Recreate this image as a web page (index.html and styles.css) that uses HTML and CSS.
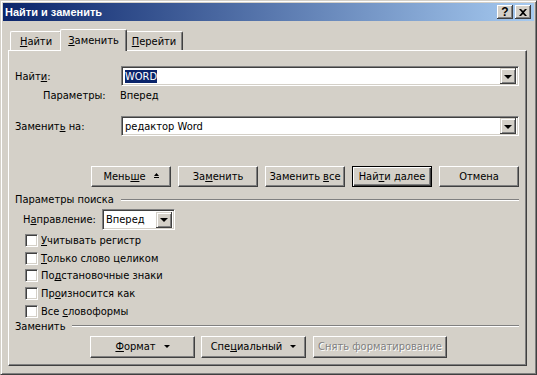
FILE: index.html
```html
<!DOCTYPE html>
<html lang="ru">
<head>
    <meta charset="UTF-8">
    <title>Найти и заменить</title>
    <link rel="stylesheet" href="styles.css">
</head>
<body>
    <div class="window">
        <div class="titlebar">
            <span class="title">Найти и заменить</span>
            <div class="caption-buttons">
                <span class="cap-btn help">?</span>
                <span class="cap-btn close">
                    <svg width="8" height="7" viewBox="0 0 8 7"><path d="M0 0h2l2 2 2-2h2L5 3.5 8 7H6L4 5 2 7H0l3-3.5z" fill="#000"/></svg>
                </span>
            </div>
        </div>

        <div class="tabs">
            <div class="tab t1"><span><u>Н</u>айти</span></div>
            <div class="tab t2 active"><span><u>З</u>аменить</span></div>
            <div class="tab t3"><span><u>П</u>ерейти</span></div>
        </div>

        <div class="panel">
            <div class="field-row">
                <label class="field-label">Найт<u>и</u>:</label>
                <div class="combo">
                    <span class="combo-text"><span class="selected">WORD</span></span>
                    <span class="drop-btn"><span class="arrow-down"></span></span>
                </div>
            </div>
            <div class="params">
                <span class="params-label">Параметры:</span>
                <span>Вперед</span>
            </div>
            <div class="field-row replace-row">
                <label class="field-label">Заменит<u>ь</u> на:</label>
                <div class="combo">
                    <span class="combo-text">редактор Word</span>
                    <span class="drop-btn"><span class="arrow-down"></span></span>
                </div>
            </div>

            <div class="button-row">
                <button class="btn"><span>Мень<u>ш</u>е</span>
                    <svg class="less-icon" width="5" height="5" viewBox="0 0 5 5"><path d="M2.5 0L5 3H0z M0 4h5v1H0z" fill="#000"/></svg>
                </button>
                <button class="btn"><span>За<u>м</u>енить</span></button>
                <button class="btn"><span>Заменить <u>в</u>се</span></button>
                <button class="btn default"><span>Най<u>т</u>и далее</span></button>
                <button class="btn"><span>Отмена</span></button>
            </div>

            <div class="group-head">
                <span>Параметры поиска</span>
                <span class="group-line"></span>
            </div>
            <div class="direction">
                <span class="direction-label">Н<u>а</u>правление:</span>
                <div class="combo select">
                    <span class="combo-text">Вперед</span>
                    <span class="drop-btn"><span class="arrow-down"></span></span>
                </div>
            </div>
            <ul class="checks">
                <li><span class="box"></span><span><u>У</u>читывать регистр</span></li>
                <li><span class="box"></span><span><u>Т</u>олько слово целиком</span></li>
                <li><span class="box"></span><span>По<u>д</u>становочные знаки</span></li>
                <li><span class="box"></span><span>Пр<u>о</u>износится как</span></li>
                <li><span class="box"></span><span>Все <u>с</u>ловоформы</span></li>
            </ul>

            <div class="group-head">
                <span>Заменить</span>
                <span class="group-line"></span>
            </div>
            <div class="bottom-row">
                <button class="btn wide"><span><u>Ф</u>ормат</span><span class="arrow-small"></span></button>
                <button class="btn wide"><span>Спе<u>ц</u>иальный</span><span class="arrow-small"></span></button>
                <button class="btn clear" disabled><span>Снять форматирование</span></button>
            </div>
        </div>
    </div>
</body>
</html>
```

FILE: styles.css
```css
body {
    margin: 0;
    background-color: #d4d0c8;
    font-family: "DejaVu Sans Condensed", "DejaVu Sans", sans-serif;
    font-stretch: condensed;
    font-size: 11px;
    color: #000;
    white-space: nowrap;
}
u {
    text-decoration: underline;
    text-underline-offset: 1px;
}
.window {
    width: 537px;
    height: 375px;
    box-sizing: border-box;
    border: 1px solid;
    border-color: #d4d0c8 #404040 #404040 #d4d0c8;
    box-shadow: inset 1px 1px #fff, inset -1px -1px #808080;
    padding: 2px;
    background-color: #d4d0c8;
}
.titlebar {
    height: 18px;
    display: flex;
    align-items: center;
    justify-content: space-between;
    padding: 0 3px 0 2px;
    background: linear-gradient(to right, #0a246a, #a6caf0);
}
.title {
    color: #fff;
    font-family: "Liberation Sans", Arial, sans-serif;
    font-stretch: normal;
    font-weight: bold;
    font-size: 11px;
}
.caption-buttons {
    display: flex;
    gap: 2px;
}
.cap-btn {
    width: 16px;
    height: 14px;
    box-sizing: border-box;
    display: flex;
    align-items: center;
    justify-content: center;
    background-color: #d4d0c8;
    box-shadow: inset -1px -1px #404040, inset 1px 1px #fff, inset -2px -2px #808080;
    font-family: "Liberation Sans", Arial, sans-serif;
    font-weight: bold;
    font-size: 12px;
    line-height: 14px;
}
.tabs {
    display: flex;
    align-items: flex-end;
    height: 21px;
    margin: 8px 0 0 7px;
}
.tab {
    height: 19px;
    box-sizing: border-box;
    display: flex;
    align-items: center;
    justify-content: center;
    border-top: 1px solid #fff;
    border-left: 1px solid #fff;
    border-right: 1px solid #404040;
    border-radius: 2px 2px 0 0;
    box-shadow: inset -1px 0 #808080;
    padding-top: 1px;
}
.t1 { width: 52px; }
.t2 { width: 63px; }
.t3 { width: 58px; }
.tab.active {
    height: 22px;
    margin: 0 -2px -1px;
    width: 67px;
    position: relative;
    z-index: 1;
    background-color: #d4d0c8;
    padding-bottom: 2px;
}
.panel {
    height: 316px;
    box-sizing: border-box;
    margin: 0 7px 0 5px;
    border: 1px solid;
    border-color: #fff #404040 #404040 #fff;
    box-shadow: inset -1px -1px #808080;
    padding: 15px 7px 0 6px;
}
.field-row {
    display: flex;
    align-items: center;
    height: 20px;
}
.field-label {
    width: 106px;
}
.combo {
    flex: 1;
    height: 20px;
    box-sizing: border-box;
    display: flex;
    align-items: center;
    justify-content: space-between;
    background-color: #fff;
    border: 1px solid;
    border-color: #808080 #fff #fff #808080;
    box-shadow: inset 1px 1px #404040, inset -1px -1px #d4d0c8;
    padding: 2px;
}
.combo-text {
    padding-left: 1px;
}
.selected {
    background-color: #0a246a;
    color: #fff;
}
.drop-btn {
    width: 16px;
    height: 16px;
    box-sizing: border-box;
    display: flex;
    align-items: center;
    justify-content: center;
    background-color: #d4d0c8;
    box-shadow: inset -1px -1px #404040, inset 1px 1px #d4d0c8, inset 2px 2px #fff, inset -2px -2px #808080;
}
.arrow-down {
    width: 0;
    height: 0;
    border-left: 4px solid transparent;
    border-right: 4px solid transparent;
    border-top: 4px solid #000;
    margin-top: 1px;
}
.params {
    display: flex;
    height: 13px;
    margin-top: 3px;
    padding-left: 28px;
    line-height: 13px;
}
.params-label {
    width: 77px;
}
.replace-row {
    margin-top: 14px;
}
.button-row {
    display: flex;
    justify-content: flex-end;
    gap: 7px;
    margin-top: 30px;
}
.btn {
    width: 80px;
    height: 21px;
    box-sizing: border-box;
    padding: 0;
    font-family: inherit;
    font-stretch: condensed;
    font-size: 11px;
    color: #000;
    background-color: #d4d0c8;
    border: 1px solid;
    border-color: #fff #404040 #404040 #fff;
    box-shadow: inset -1px -1px #808080;
    display: flex;
    align-items: center;
    justify-content: center;
    white-space: nowrap;
}
.btn.default {
    border: 1px solid #000;
    box-shadow: inset 1px 1px #fff, inset -1px -1px #404040, inset -2px -2px #808080;
}
.less-icon {
    margin-left: 8px;
    margin-top: -2px;
}
.group-head {
    display: flex;
    align-items: center;
    height: 13px;
    margin-top: 6px;
}
.group-line {
    flex: 1;
    height: 0;
    margin-left: 7px;
    border-top: 1px solid #808080;
    border-bottom: 1px solid #fff;
}
.direction {
    display: flex;
    align-items: center;
    margin-top: 3px;
    padding-left: 8px;
}
.direction-label {
    width: 79px;
}
.combo.select {
    flex: none;
    width: 73px;
    height: 21px;
}
.checks {
    list-style: none;
    margin: 2px 0 0;
    padding: 0 0 0 10px;
}
.checks li {
    height: 17.6px;
    display: flex;
    align-items: center;
    gap: 3px;
}
.box {
    width: 13px;
    height: 13px;
    box-sizing: border-box;
    background-color: #fff;
    border: 1px solid;
    border-color: #808080 #fff #fff #808080;
    box-shadow: inset 1px 1px #404040, inset -1px -1px #d4d0c8;
}
.checks + .group-head {
    margin-top: 0;
}
.bottom-row {
    display: flex;
    gap: 6px;
    margin-top: 3px;
    padding-left: 75px;
}
.btn.wide {
    width: 105px;
    height: 22px;
}
.btn.clear {
    width: 134px;
    height: 22px;
    margin-left: 1px;
    color: #808080;
    text-shadow: 1px 1px #fff;
}
.arrow-small {
    width: 0;
    height: 0;
    margin-left: 8px;
    border-left: 3px solid transparent;
    border-right: 3px solid transparent;
    border-top: 3px solid #000;
}
```
